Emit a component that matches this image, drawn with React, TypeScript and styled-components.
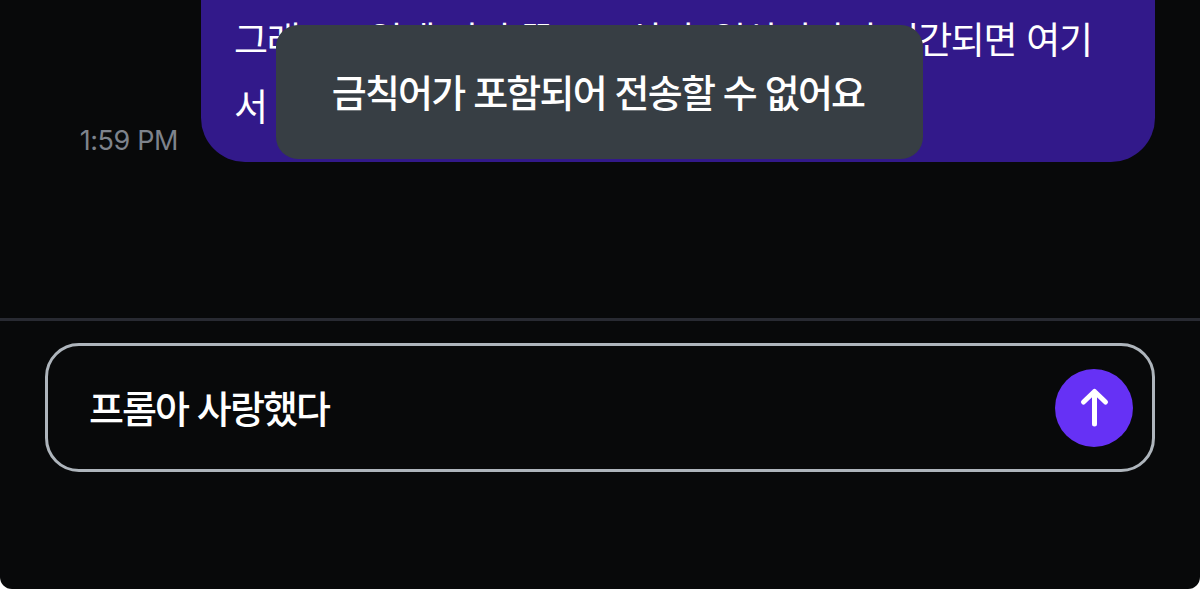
import React, { useState } from "react";
import styled, { createGlobalStyle } from "styled-components";

const GlobalStyle = createGlobalStyle`
  * {
    box-sizing: border-box;
  }
  body {
    margin: 0;
    background: #fff;
    font-family: "Noto Sans CJK KR", sans-serif;
  }
`;

const Screen = styled.main`
  position: relative;
  display: flex;
  flex-direction: column;
  height: 589px;
  overflow: hidden;
  border-radius: 0 0 12px 12px;
  background: #08090a;
`;

const MessageList = styled.section`
  display: flex;
  flex-direction: column;
  height: 318px;
  padding-right: 45px;
`;

const MessageRow = styled.div`
  display: flex;
  justify-content: flex-end;
  align-items: flex-end;
  gap: 23px;
  height: 162px;
`;

const SentTime = styled.time`
  padding-bottom: 4px;
  color: #7e838c;
  font-family: Inter, sans-serif;
  font-size: 27px;
  line-height: 34px;
  letter-spacing: -0.4px;
`;

const Bubble = styled.div`
  display: flex;
  flex-direction: column;
  justify-content: flex-end;
  width: 954px;
  height: 162px;
  padding: 0 33px 23px;
  border-radius: 0 0 44px 44px;
  background: #32198a;
`;

const BubbleLine = styled.span`
  color: #fff;
  font-size: 37px;
  line-height: 67px;
  letter-spacing: -1.4px;
  word-spacing: 3.3px;
  white-space: pre;
`;

const Toast = styled.div`
  position: absolute;
  top: 25px;
  left: 276px;
  display: flex;
  align-items: center;
  justify-content: center;
  width: 647px;
  height: 134px;
  padding: 0 3px 4px 0;
  border-radius: 22px;
  background: #373e44;
  color: #fff;
  font-size: 38px;
  font-weight: 500;
  letter-spacing: -1.8px;
  word-spacing: 2px;
  white-space: nowrap;
`;

const Composer = styled.form`
  display: flex;
  flex: 1;
  align-items: flex-start;
  padding: 22px 45px 0;
  border-top: 3px solid #282a32;
`;

const Field = styled.div`
  display: flex;
  flex: 1;
  align-items: center;
  height: 129px;
  padding: 0 19px 0 41px;
  border: 3px solid #aeb5bc;
  border-radius: 34px;
`;

const TextInput = styled.input`
  flex: 1;
  min-width: 0;
  height: 70px;
  padding: 0 0 3px;
  border: none;
  outline: none;
  background: transparent;
  color: #fff;
  font-family: inherit;
  font-size: 38px;
  font-weight: 500;
  letter-spacing: -1.9px;
  word-spacing: 2px;
`;

const SendButton = styled.button`
  display: flex;
  align-items: center;
  justify-content: center;
  width: 78px;
  height: 78px;
  padding: 0;
  border: none;
  border-radius: 50%;
  background: #6631f5;
`;

const App = () => {
  const [message, setMessage] = useState("프롬아 사랑했다");

  return (
    <>
      <GlobalStyle />
      <Screen>
        <MessageList>
          <MessageRow>
            <SentTime>1:59 PM</SentTime>
            <Bubble>
              <BubbleLine>그래도... 일에 미리 뜻도고 심지, 일상이지비 시간되면 여기</BubbleLine>
              <BubbleLine>서</BubbleLine>
            </Bubble>
          </MessageRow>
        </MessageList>
        <Composer onSubmit={(e) => e.preventDefault()}>
          <Field>
            <TextInput
              type="text"
              value={message}
              onChange={(e) => setMessage(e.currentTarget.value)}
            />
            <SendButton type="submit">
              <svg width="78" height="78" viewBox="0 0 78 78" fill="none">
                <path
                  d="M28.5 33L39.5 22.5L50.5 33M39.5 22.5V55"
                  stroke="#fff"
                  strokeWidth="5"
                  strokeLinecap="round"
                  strokeLinejoin="round"
                />
              </svg>
            </SendButton>
          </Field>
        </Composer>
        <Toast>금칙어가 포함되어 전송할 수 없어요</Toast>
      </Screen>
    </>
  );
};

export default App;
